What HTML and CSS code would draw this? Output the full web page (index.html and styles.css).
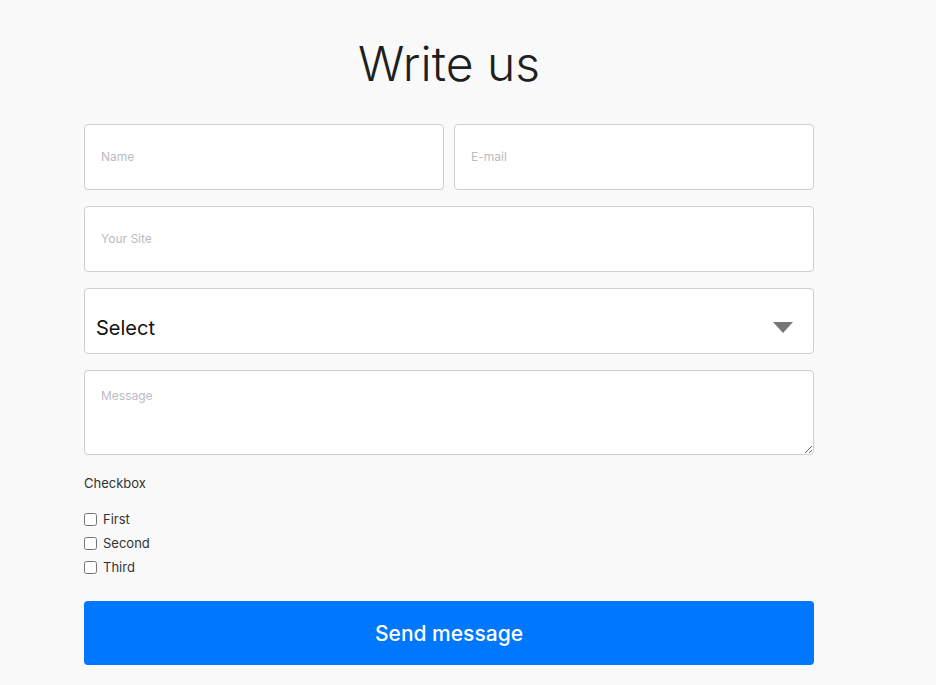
FILE: index.html
```html
<!DOCTYPE html>
<html>
<head>
    <title>Write us</title>
    <link rel="stylesheet" href="styles.css">
</head>
<body>

<div class="container">
    <h1>Write us</h1>

    <form class="contact-form">
        <div class="row">
            <input type="text" class="field" placeholder="Name">
            <input type="text" class="field" placeholder="E-mail">
        </div>
        <input type="text" class="field" placeholder="Your Site">

        <div class="select-box">
            <select class="field select">
                <option>Select</option>
                <option>Option 1</option>
                <option>Option 2</option>
            </select>
            <span class="arrow"></span>
        </div>

        <textarea class="field message" placeholder="Message"></textarea>

        <div class="checkbox-group">
            <div class="group-label">Checkbox</div>
            <label class="check"><input type="checkbox"> First</label>
            <label class="check"><input type="checkbox"> Second</label>
            <label class="check"><input type="checkbox"> Third</label>
        </div>

        <button type="button" class="send-btn">Send message</button>
    </form>
</div>

</body>
</html>
```

FILE: styles.css
```css
body {
    font-family: Inter, "DejaVu Sans", sans-serif;
    margin: 0;
    padding: 0;
    background-color: #f9f9f9;
    color: #222;
}
.container {
    width: 730px;
    margin-left: 84px;
    padding-top: 33px;
}
h1 {
    margin: 0 0 29px;
    font-size: 48px;
    font-weight: 300;
    line-height: 62px;
    text-align: center;
    color: #1f1f1f;
}
.contact-form {
    display: flex;
    flex-direction: column;
    gap: 16px;
}
.row {
    display: flex;
    gap: 10px;
}
.row .field {
    flex: 1;
    min-width: 0;
}
.field {
    box-sizing: border-box;
    height: 66px;
    padding: 0 16px 2px;
    border: 1px solid #cfcfcf;
    border-radius: 4px;
    background: white;
    font-family: inherit;
    font-size: 12px;
    color: #222;
    outline: none;
}
.field::placeholder {
    color: #b9bcc4;
}
.select-box {
    position: relative;
}
.select {
    width: 100%;
    padding: 14px 11px 0;
    font-size: 20px;
    color: #111;
    appearance: none;
}
.arrow {
    position: absolute;
    right: 21px;
    top: 34px;
    width: 0;
    height: 0;
    border-left: 10px solid transparent;
    border-right: 10px solid transparent;
    border-top: 11px solid #777;
    pointer-events: none;
}
.message {
    height: 85px;
    padding: 17px 16px;
    resize: vertical;
}
.checkbox-group {
    display: flex;
    flex-direction: column;
    gap: 6px;
    padding-top: 4px;
    font-size: 13px;
    color: #333;
}
.group-label {
    margin-bottom: 13px;
}
.check {
    display: flex;
    align-items: center;
    gap: 6px;
    height: 18px;
}
.check input {
    width: 13px;
    height: 13px;
    margin: 0;
}
.send-btn {
    height: 64px;
    margin-top: 9px;
    border: none;
    border-radius: 4px;
    background: #0077ff;
    color: white;
    font-family: inherit;
    font-size: 21px;
    font-weight: 500;
    cursor: pointer;
}
```
